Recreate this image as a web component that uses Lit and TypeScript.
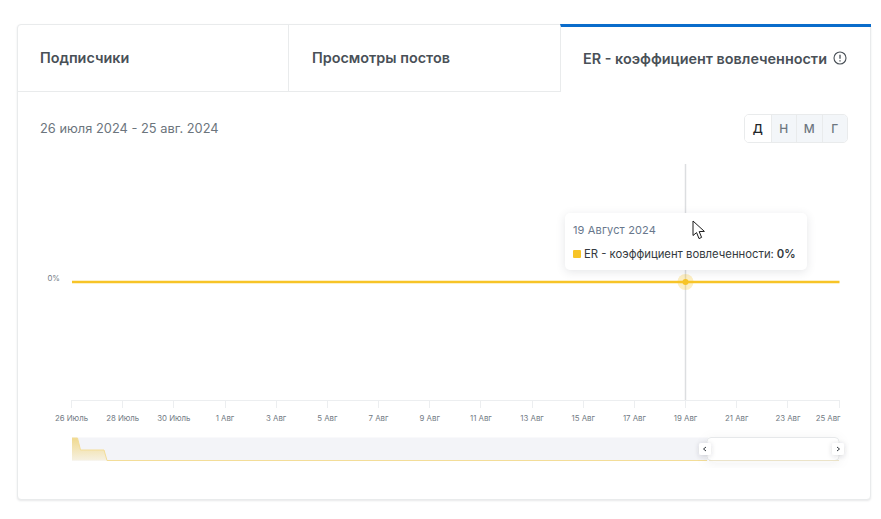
import { LitElement, html, css, svg } from "lit";
import { customElement } from "lit/decorators.js";

const ticks = ["26 Июль","28 Июль","30 Июль","1 Авг","3 Авг","5 Авг","7 Авг","9 Авг","11 Авг","13 Авг","15 Авг","17 Авг","19 Авг","21 Авг","23 Авг","25 Авг"];
const X0 = 53.5;
const STEP = 51.17;

@customElement("app-root")
export class AppRoot extends LitElement {
  static styles = css`
    :host { display: block; padding: 24px 10px 19px 17px; background: #fff; font-family: Inter, "Noto Sans", sans-serif; color: #495057; }
    .card { border: 1px solid #e9ebec; border-radius: 4px; box-shadow: 0 1px 2px rgba(56,65,74,.12); height: 476px; box-sizing: border-box; background: #fff; }
    .tabs { display: grid; grid-template-columns: 271px 272px 1fr; height: 67px; }
    .tab { display: flex; align-items: center; gap: 6px; padding: 0 0 2px 23px; font-size: 14.4px; font-weight: 600; color: #495057; border-bottom: 1px solid #e9ebec; border-right: 1px solid #e9ebec; box-sizing: border-box; white-space: nowrap; }
    .tab.first { padding-left: 22px; }
    .tab.active { border-bottom: none; border-right: none; border-top: 3px solid #0a6ccb; margin: -1px -1px 0 -1px; border-left: 1px solid #e9ebec; height: 68px; padding: 0 0 3px 22px; }
    .tab.second { border-right: none; }
    .tab svg { width: 14px; height: 14px; flex: none; }
    .body { padding: 21px 22px 0 22px; }
    .head { display: flex; justify-content: space-between; align-items: center; height: 30px; }
    .date { font-size: 12.85px; color: #6c757d; font-weight: 400; }
    .group { display: flex; border: 1px solid #e9ebec; border-radius: 5px; overflow: hidden; height: 29px; box-sizing: border-box; }
    .group span { width: 25.5px; display: flex; align-items: center; justify-content: center; background: #f3f6f9; color: #6d7680; font-size: 12px; font-weight: 500; border-left: 1px solid #e9ebec; box-sizing: border-box; }
    .group span:first-child { background: #fff; color: #212529; border-left: none; }
    .chart { position: relative; height: 306px; margin: 21px 0 0 -22px; }
    .chart svg.plot { display: block; width: 854px; height: 306px; }
    .plot text { font-family: Inter, "Noto Sans", sans-serif; font-size: 7.8px; fill: #737c85; }
    .tip { position: absolute; left: 547px; top: 49px; width: 242px; height: 57px; box-sizing: border-box; background: #fff; border-radius: 5px; box-shadow: 0 2px 10px rgba(56,65,74,.13); padding: 10px 8px 0; }
    .tip .t { font-size: 11px; color: #68778c; line-height: 14px; letter-spacing: .15px; }
    .tip .v { display: flex; align-items: center; margin-top: 10px; font-size: 11.3px; line-height: 14px; color: #343a40; white-space: nowrap; }
    .tip .v i { width: 8px; height: 8px; border-radius: 1px; background: #f7c427; margin-right: 3px; }
    .tip .v b { font-weight: 600; margin-left: 3px; }
    .cursor { position: absolute; left: 674px; top: 56px; width: 14px; height: 20px; }
  `;

  render() {
    const tickMarks = ticks.map((t, i) => {
      const x = X0 + STEP * i;
      const last = i === ticks.length - 1;
      return svg`<line x1=${Math.floor(x) + 0.5} x2=${Math.floor(x) + 0.5} y1="236" y2="244" stroke="#eceef0"/>
        <text x=${last ? 822.5 : x} y="257" text-anchor=${last ? "end" : "middle"}>${t}</text>`;
    });
    return html`
      <div class="card">
        <div class="tabs">
          <div class="tab first">Подписчики</div>
          <div class="tab second">Просмотры постов</div>
          <div class="tab active">ER - коэффициент вовлеченности
            <svg viewBox="0 0 14 14" fill="none" stroke="#495057" stroke-width="1.1"><circle cx="7" cy="7" r="6"/><line x1="7" y1="3.8" x2="7" y2="7.8" stroke-width="1.3"/><line x1="7" y1="9.2" x2="7" y2="10.4" stroke-width="1.3"/></svg>
          </div>
        </div>
        <div class="body">
          <div class="head">
            <div class="date">26 июля 2024 - 25 авг. 2024</div>
            <div class="group"><span>Д</span><span>Н</span><span>М</span><span>Г</span></div>
          </div>
          <div class="chart">
            <svg class="plot" viewBox="0 0 854 306">
              <defs>
                <linearGradient id="nav" x1="0" y1="0" x2="0" y2="1"><stop offset="0" stop-color="#f0d98f"/><stop offset="1" stop-color="#f6f1e2"/></linearGradient>
                <filter id="sh" x="-50%" y="-50%" width="200%" height="200%"><feDropShadow dx="0" dy="1" stdDeviation="2.5" flood-color="#38414a" flood-opacity=".18"/></filter>
                <filter id="sh2" x="-30%" y="-30%" width="160%" height="160%"><feDropShadow dx="0" dy="2" stdDeviation="6" flood-color="#38414a" flood-opacity=".06"/></filter>
              </defs>
              <line x1="667.5" x2="667.5" y1="0" y2="236" stroke="#dcdee0" stroke-width="1.5"/>
              <line x1="53" x2="822" y1="236.5" y2="236.5" stroke="#eceef0"/>
              ${tickMarks}
              <text x="42" y="117" text-anchor="end">0%</text>
              <line x1="54" x2="821.5" y1="118" y2="118" stroke="#f7c427" stroke-width="2.4"/>
              <circle cx="667.5" cy="118" r="8" fill="#f7c427" fill-opacity=".28"/>
              <circle cx="667.5" cy="118" r="3" fill="#f7c427"/>
              <rect x="54" y="273.5" width="636" height="23" fill="#f3f4f8"/>
              <path d="M54 274 L59.5 274 L62.5 286 L86 286 L89 296.5 L54 296.5 Z" fill="url(#nav)"/>
              <path d="M54 274 L59.5 274 L62.5 286 L86 286 L89 296.5 L689 296.5" fill="none" stroke="#f3dd98" stroke-width="1"/>
              <rect x="689" y="273.5" width="132" height="23" rx="4" fill="#fff" stroke="#e6e8ea" filter="url(#sh2)"/>
              <line x1="691" x2="821" y1="296.5" y2="296.5" stroke="#ebe3c8"/>
              <rect x="681" y="279" width="12" height="12" rx="2" fill="#fff" filter="url(#sh)"/>
              <path d="M688 283 L685.5 285 L688 287" fill="none" stroke="#343a40" stroke-width="1"/>
              <rect x="814" y="279" width="12" height="12" rx="2" fill="#fff" filter="url(#sh)"/>
              <path d="M819 283 L821.5 285 L819 287" fill="none" stroke="#343a40" stroke-width="1"/>
            </svg>
            <div class="tip">
              <div class="t">19 Август 2024</div>
              <div class="v"><i></i>ER - коэффициент вовлеченности: <b>0%</b></div>
            </div>
            <svg class="cursor" viewBox="0 0 14 20"><path d="M1 1 L1 15.5 L4.6 12.6 L7 18.6 L9.6 17.4 L7.2 11.6 L12.4 11.4 Z" fill="#fff" stroke="#1a1a1a" stroke-width="1" stroke-linejoin="round"/></svg>
          </div>
        </div>
      </div>
    `;
  }
}
